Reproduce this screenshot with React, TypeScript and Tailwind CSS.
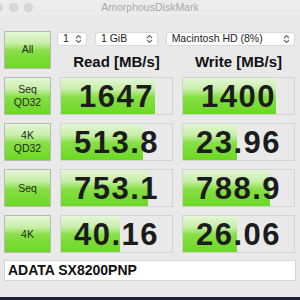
const ui = "font-['Liberation_Sans',Arial,sans-serif]";

const green =
  "bg-[linear-gradient(to_bottom,#e4f6d8_0%,#c6eea6_32%,#88df47_52%,#6bd823_100%)]";

type Row = {
  top: string;
  bottom?: string;
  read: string;
  readFill: number;
  write: string;
  writeFill: number;
};

const rows: Row[] = [
  { top: "Seq", bottom: "QD32", read: "1647", readFill: 94, write: "1400", writeFill: 93 },
  { top: "4K", bottom: "QD32", read: "513.8", readFill: 82, write: "23.96", writeFill: 54 },
  { top: "Seq", read: "753.1", readFill: 87, write: "788.9", writeFill: 87 },
  { top: "4K", read: "40.16", readFill: 59, write: "26.06", writeFill: 54 },
];

function Updown() {
  return (
    <svg width="7" height="10" viewBox="0 0 7 10" fill="none" stroke="#6b6b6b" strokeWidth="1.1">
      <path d="M1 4 L3.5 1.5 L6 4" />
      <path d="M1 6 L3.5 8.5 L6 6" />
    </svg>
  );
}

function Select({ label, w }: { label: string; w: string }) {
  return (
    <div
      className={`${w} h-[14px] flex items-center justify-between pl-[5px] pr-[4px] bg-white rounded-[3px] border border-[#d9d9d9] text-[10.5px] text-[#222]`}
    >
      <span>{label}</span>
      <Updown />
    </div>
  );
}

function TestButton({ top, bottom }: { top: string; bottom?: string }) {
  return (
    <div
      className={`h-[38px] flex flex-col items-center justify-center border border-[#b8b8b8] ${green} text-[10.5px] leading-[13px] text-[#1f2a18]`}
    >
      <span>{top}</span>
      {bottom && <span>{bottom}</span>}
    </div>
  );
}

function Bar({ value, fill }: { value: string; fill: number }) {
  return (
    <div className="relative h-[38px] border border-[#d2d2d2] bg-[#e9e9e9] flex items-center justify-center">
      <div className={`absolute left-0 top-0 bottom-0 ${green}`} style={{ width: fill }} />
      <span className="relative text-[31px] font-bold tracking-[1.5px] text-[#1c1c1c] leading-none">
        {value}
      </span>
    </div>
  );
}

export default function App() {
  return (
    <div className={`${ui} w-[300px] h-[300px] bg-[#e9e9e9] flex flex-col overflow-hidden`}>
      <div className="relative h-[15px] bg-[#ececec] flex items-center justify-center">
        <div className="absolute left-[-6px] top-[3px] flex gap-[6px]">
          <span className="w-[9px] h-[9px] rounded-full bg-[#d8d8d8] border border-[#cfcfcf]" />
          <span className="w-[9px] h-[9px] rounded-full bg-[#d8d8d8] border border-[#cfcfcf]" />
          <span className="w-[9px] h-[9px] rounded-full bg-[#d8d8d8] border border-[#cfcfcf]" />
        </div>
        <span className="text-[10.5px] text-[#a8a8a8]">AmorphousDiskMark</span>
      </div>

      <div className="pt-[16px] pl-[4px] grid grid-cols-[47px_113px_113px] gap-x-[9px] gap-y-[8px]">
        <div
          className={`h-[38px] flex items-center justify-center border border-[#b8b8b8] ${green} text-[10.5px] text-[#1f2a18]`}
        >
          All
        </div>
        <div className="col-span-2 flex flex-col">
          <div className="flex gap-[8px] ml-[-3px] mt-[1px]">
            <Select label="1" w="w-[30px]" />
            <Select label="1 GiB" w="w-[63px]" />
            <Select label="Macintosh HD (8%)" w="w-[130px]" />
          </div>
          <div className="flex gap-[9px] mt-[8px]">
            <div className="w-[113px] text-center text-[15px] font-bold leading-[15px] text-[#111]">
              Read [MB/s]
            </div>
            <div className="w-[113px] text-center text-[15px] font-bold leading-[15px] text-[#111]">
              Write [MB/s]
            </div>
          </div>
        </div>

        {rows.map((r, i) => (
          <div key={i} className="contents">
            <TestButton top={r.top} bottom={r.bottom} />
            <Bar value={r.read} fill={r.readFill} />
            <Bar value={r.write} fill={r.writeFill} />
          </div>
        ))}
      </div>

      <div className="mt-[7px] ml-[4px] w-[292px] h-[21px] bg-white border border-[#d4d4d4] flex items-center pl-[3px] text-[14px] font-bold text-[#111]">
        ADATA SX8200PNP
      </div>
      <div className="mt-auto h-[3px] bg-[#1c2538]" />
    </div>
  );
}
